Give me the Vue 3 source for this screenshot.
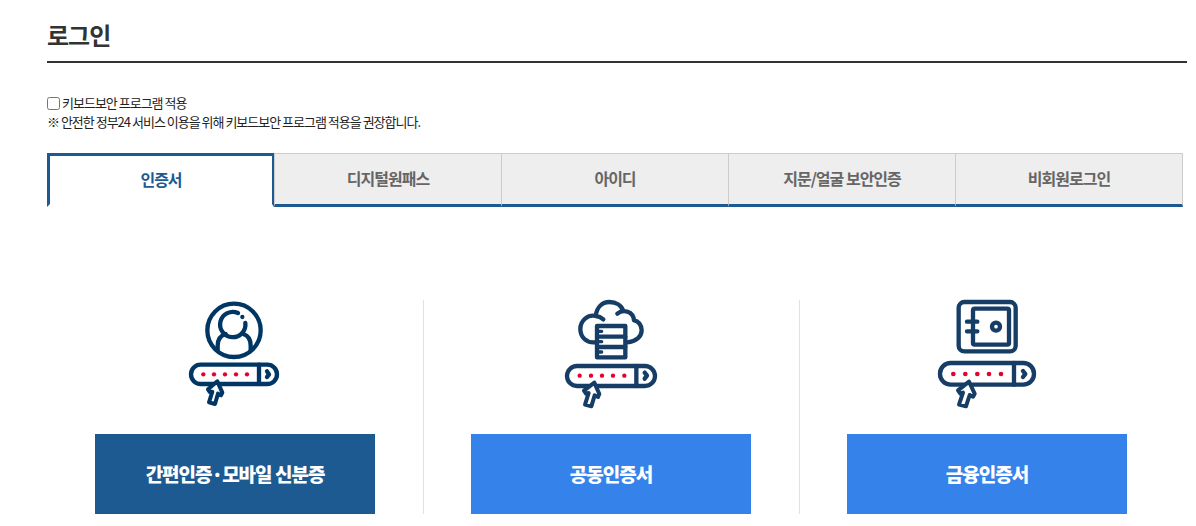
<template>
  <div class="login-page">
    <!-- Title -->
    <h1 class="title">로그인</h1>
    <!-- Keyboard security -->
    <div class="security">
      <label class="security-label">
        <input type="checkbox" v-model="useSecurity" class="security-check">
        <span>키보드보안 프로그램 적용</span>
      </label>
      <p class="security-text">※ 안전한 정부24 서비스 이용을 위해 키보드보안 프로그램 적용을 권장합니다.</p>
    </div>
    <!-- Tabs -->
    <div class="tabs">
      <button
        v-for="(tab, index) in tabs"
        :key="tab"
        type="button"
        class="tab"
        :class="{ active: activeTab === index }"
        @click="activeTab = index"
      >
        {{ tab }}
      </button>
    </div>
    <!-- Certificates -->
    <div class="cert-list">
      <div v-for="cert in certs" :key="cert.id" class="cert-item">
        <!-- Person -->
        <svg v-if="cert.id === 'simple'" class="icon icon-simple" viewBox="0 0 330 360">
          <circle cx="162" cy="106" r="80" />
          <path d="M174 54A38 38 0 1 0 196 84" />
          <circle class="fill" cx="187" cy="66" r="6.5" />
          <path d="M113 166V152Q113 124 137 117M190 117Q212 124 212 152V166" />
          <rect x="33" y="209" width="258" height="58" rx="29" />
          <path d="M237 209V267" />
          <path class="arrow" d="M261 229L267 238L261 246" />
          <circle v-for="x in [70, 102, 135, 168, 201]" :key="x" class="dot" :cx="x" cy="238" r="6.5" />
          <path class="cursor" d="M112 259L84 283L89 291L97 290L87 322L105 327L114 296L123 301L127 293Z" />
        </svg>
        <!-- Cloud -->
        <svg v-else-if="cert.id === 'joint'" class="icon icon-joint" viewBox="0 0 336 360">
          <path d="M121 142C94 145 76 126 76 102C76 76 99 58 122 63Q135 64 145 73M122 62C126 35 143 21 163 21C184 21 200 32 205 48M187 56C205 41 235 49 237 76C250 78 260 90 260 106C260 125 243 140 217 142" />
          <rect x="126" y="93" width="85" height="94" />
          <path d="M126 125H211M126 156H211" />
          <path class="slot" d="M131 109H140M131 140H140M131 171H140" />
          <rect x="36" y="213" width="264" height="60" rx="30" />
          <path d="M244 213V273" />
          <path class="arrow" d="M269 233L276 242L269 251" />
          <circle v-for="x in [74, 108, 141, 174, 208]" :key="x" class="dot" :cx="x" cy="242" r="6.5" />
          <path class="cursor" d="M118 263L87 287L93 296L101 294L90 329L109 334L119 301L129 306L133 297Z" />
        </svg>
        <!-- Safe -->
        <svg v-else class="icon icon-finance" viewBox="0 0 342 360">
          <rect x="86" y="21" width="171" height="148" rx="17" />
          <rect x="129" y="41" width="108" height="108" rx="5" />
          <circle cx="198" cy="95" r="12" />
          <path d="M111 80H142M111 109H142" />
          <rect x="30" y="204" width="282" height="65" rx="32" />
          <path d="M252 204V269" />
          <path class="arrow" d="M279 228L286 237L279 246" />
          <circle v-for="x in [70, 106, 142, 177, 213]" :key="x" class="dot" :cx="x" cy="237" r="7" />
          <path class="cursor" d="M117 260L84 286L91 296L99 293L87 329L108 334L119 300L129 305L134 296Z" />
        </svg>
        <button type="button" class="cert-btn" :class="{ primary: cert.id === 'simple' }">
          {{ cert.name }}
        </button>
      </div>
    </div>
  </div>
</template>

<script setup>
import { ref } from "vue";
// State
const useSecurity = ref(false);
const activeTab = ref(0);
const tabs = ["인증서", "디지털원패스", "아이디", "지문/얼굴 보안인증", "비회원로그인"];
const certs = [
  { id: "simple", name: "간편인증·모바일 신분증" },
  { id: "joint", name: "공동인증서" },
  { id: "finance", name: "금융인증서" },
];
</script>

<style>
body{
  margin: 0;
  background: #fff;
}
</style>

<style scoped>
*{
  margin: 0;
  padding: 0;
  box-sizing: border-box;
}
.login-page{
  height: 526px;
  padding: 17px 9px 0 47px;
  overflow: hidden;
  color: #333;
  font-family: "Noto Sans CJK KR", "Noto Sans CJK SC", sans-serif;
  letter-spacing: -1px;
}
/* Title */
.title{
  height: 46px;
  border-bottom: 2px solid #333;
  font-size: 24px;
  line-height: 36px;
  font-weight: 700;
}
/* Security */
.security{
  margin-top: 30px;
  font-size: 13px;
  line-height: 19px;
  color: #222;
}
.security-label{
  display: flex;
  align-items: center;
  gap: 2px;
  height: 19px;
}
.security-check{
  width: 13px;
  height: 13px;
  margin-top: 1px;
}
/* Tabs */
.tabs{
  display: flex;
  width: 1136px;
  margin-top: 22px;
}
.tab{
  width: 227px;
  height: 54px;
  padding-bottom: 2px;
  border: 1px solid #ccc;
  border-right: none;
  border-bottom: 3px solid #1d5a92;
  background: #eee;
  color: #666;
  font-family: inherit;
  font-size: 16px;
  font-weight: 700;
  letter-spacing: -1px;
  cursor: pointer;
}
.tab:last-child{
  width: 228px;
  border-right: 1px solid #ccc;
}
.tab.active{
  border: 3px solid #1d5a92;
  border-right-width: 2px;
  border-bottom-color: #fff;
  background: #fff;
  color: #1d5a92;
}
/* Certificates */
.cert-list{
  display: flex;
  margin-top: 93px;
}
.cert-item{
  display: flex;
  flex-direction: column;
  align-items: center;
  width: 376px;
  height: 214px;
}
.cert-item + .cert-item{
  border-left: 1px solid #e1e1e1;
  padding-right: 1px;
}
.icon{
  flex: none;
  height: 120px;
  margin-top: -5px;
  fill: none;
  stroke: #163d66;
  stroke-width: 13;
  stroke-linecap: round;
  stroke-linejoin: round;
}
.icon-simple{
  width: 110px;
  stroke: #003663;
}
.icon-joint{
  width: 112px;
}
.icon-finance{
  width: 114px;
}
.fill{
  fill: #003663;
  stroke: none;
}
.dot{
  fill: #e4002f;
  stroke: none;
}
.slot{
  stroke-width: 10;
}
.cursor{
  fill: #fff;
  stroke-width: 12;
}
/* Button */
.cert-btn{
  flex: none;
  width: 280px;
  height: 80px;
  margin-top: 19px;
  padding-bottom: 2px;
  border: none;
  background: #3482ea;
  color: #fff;
  font-family: inherit;
  font-size: 19px;
  font-weight: 900;
  letter-spacing: -1px;
  cursor: pointer;
}
.cert-btn.primary{
  background: #1d5a92;
}
</style>
